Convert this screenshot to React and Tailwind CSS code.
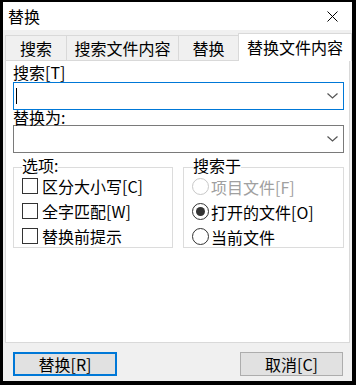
import React from "react";

const font = { fontFamily: '"Noto Sans CJK SC", "Noto Sans", sans-serif' };

function Chevron() {
  return (
    <svg width="11" height="6" viewBox="0 0 11 6" className="shrink-0">
      <path d="M0.5 0.5 L5.5 5 L10.5 0.5" fill="none" stroke="#555" strokeWidth="1.2" />
    </svg>
  );
}

function Check({ label }) {
  return (
    <div className="flex items-center h-[25px]">
      <div className="w-[16px] h-[16px] border border-[#333] bg-white shrink-0" />
      <span className="ml-[4px] leading-[18px]">{label}</span>
    </div>
  );
}

function Radio({ label, checked, disabled }) {
  return (
    <div className={"flex items-center h-[25px] " + (disabled ? "text-[#a0a0a0]" : "text-black")}>
      <div
        className={
          "w-[17px] h-[17px] rounded-full border bg-white shrink-0 flex items-center justify-center " +
          (disabled ? "border-[#c8c8c8]" : "border-[#333]")
        }
      >
        {checked && <div className="w-[9px] h-[9px] rounded-full bg-[#333]" />}
      </div>
      <span className="ml-[2px] leading-[18px]">{label}</span>
    </div>
  );
}

export default function App() {
  return (
    <div className="w-[356px] h-[385px] bg-black pt-[2px] pl-[3px]" style={font}>
      <div className="w-[349px] h-[379px] bg-[#f0f0f0] flex flex-col text-[16px] text-black">
        {/* title bar */}
        <div className="h-[28px] bg-white flex items-center justify-between pl-[5px] pr-[14px] shrink-0">
          <span className="leading-[18px] text-[16px]">替换</span>
          <svg width="11" height="11" viewBox="0 0 11 11">
            <path d="M0.5 0.5 L10.5 10.5 M10.5 0.5 L0.5 10.5" stroke="#000" strokeWidth="1" />
          </svg>
        </div>
        {/* tabs */}
        <div className="h-[30px] flex items-end pl-[2px] shrink-0 relative z-10">
          <div className="w-[62px] h-[25px] border border-[#d9d9d9] border-b-0 flex items-center justify-center leading-[18px]">搜索</div>
          <div className="w-[113px] h-[25px] -ml-px border border-[#d9d9d9] border-b-0 flex items-center justify-center leading-[18px]">搜索文件内容</div>
          <div className="w-[61px] h-[25px] -ml-px border border-[#d9d9d9] border-b-0 flex items-center justify-center leading-[18px]">替换</div>
          <div className="w-[114px] h-[28px] -ml-px -mb-px bg-white border border-[#d9d9d9] border-b-0 flex items-center justify-center leading-[18px] pb-[1px]">替换文件内容</div>
        </div>
        {/* panel */}
        <div className="mx-[2px] h-[283px] bg-white border border-[#d9d9d9] pl-[7px] pr-[5px] shrink-0">
          <div className="mt-[3px] h-[18px] leading-[16px]">搜索[T]</div>
          <div className="h-[28px] border border-[#0078d7] bg-white flex items-center justify-between pl-[2px] pr-[5px]">
            <div className="w-px h-[16px] bg-black" />
            <Chevron />
          </div>
          <div className="h-[15px] leading-[15px]">替换为:</div>
          <div className="h-[28px] border border-[#7a7a7a] bg-white flex items-center justify-end pr-[5px]">
            <Chevron />
          </div>
          <div className="mt-[14px] flex gap-[10px]">
            <div className="relative w-[160px] h-[81px] border border-[#dcdcdc] pl-[8px] pt-[5px]">
              <span className="absolute left-[8px] -top-[11px] leading-[16px] bg-white">选项:</span>
              <Check label="区分大小写[C]" />
              <Check label="全字匹配[W]" />
              <Check label="替换前提示" />
            </div>
            <div className="relative w-[161px] h-[81px] border border-[#dcdcdc] pl-[8px] pt-[6px]">
              <span className="absolute left-[9px] -top-[11px] leading-[16px] bg-white">搜索于</span>
              <Radio label="项目文件[F]" disabled />
              <Radio label="打开的文件[O]" checked />
              <Radio label="当前文件" />
            </div>
          </div>
        </div>
        {/* buttons */}
        <div className="flex justify-between pl-[10px] pr-[9px] pt-[9px]">
          <div className="w-[104px] h-[24px] border-2 border-[#0078d7] bg-[#e1e1e1] flex items-center justify-center leading-[18px]">替换[R]</div>
          <div className="w-[103px] h-[24px] border border-[#adadad] bg-[#e1e1e1] flex items-center justify-center leading-[18px]">取消[C]</div>
        </div>
      </div>
    </div>
  );
}
